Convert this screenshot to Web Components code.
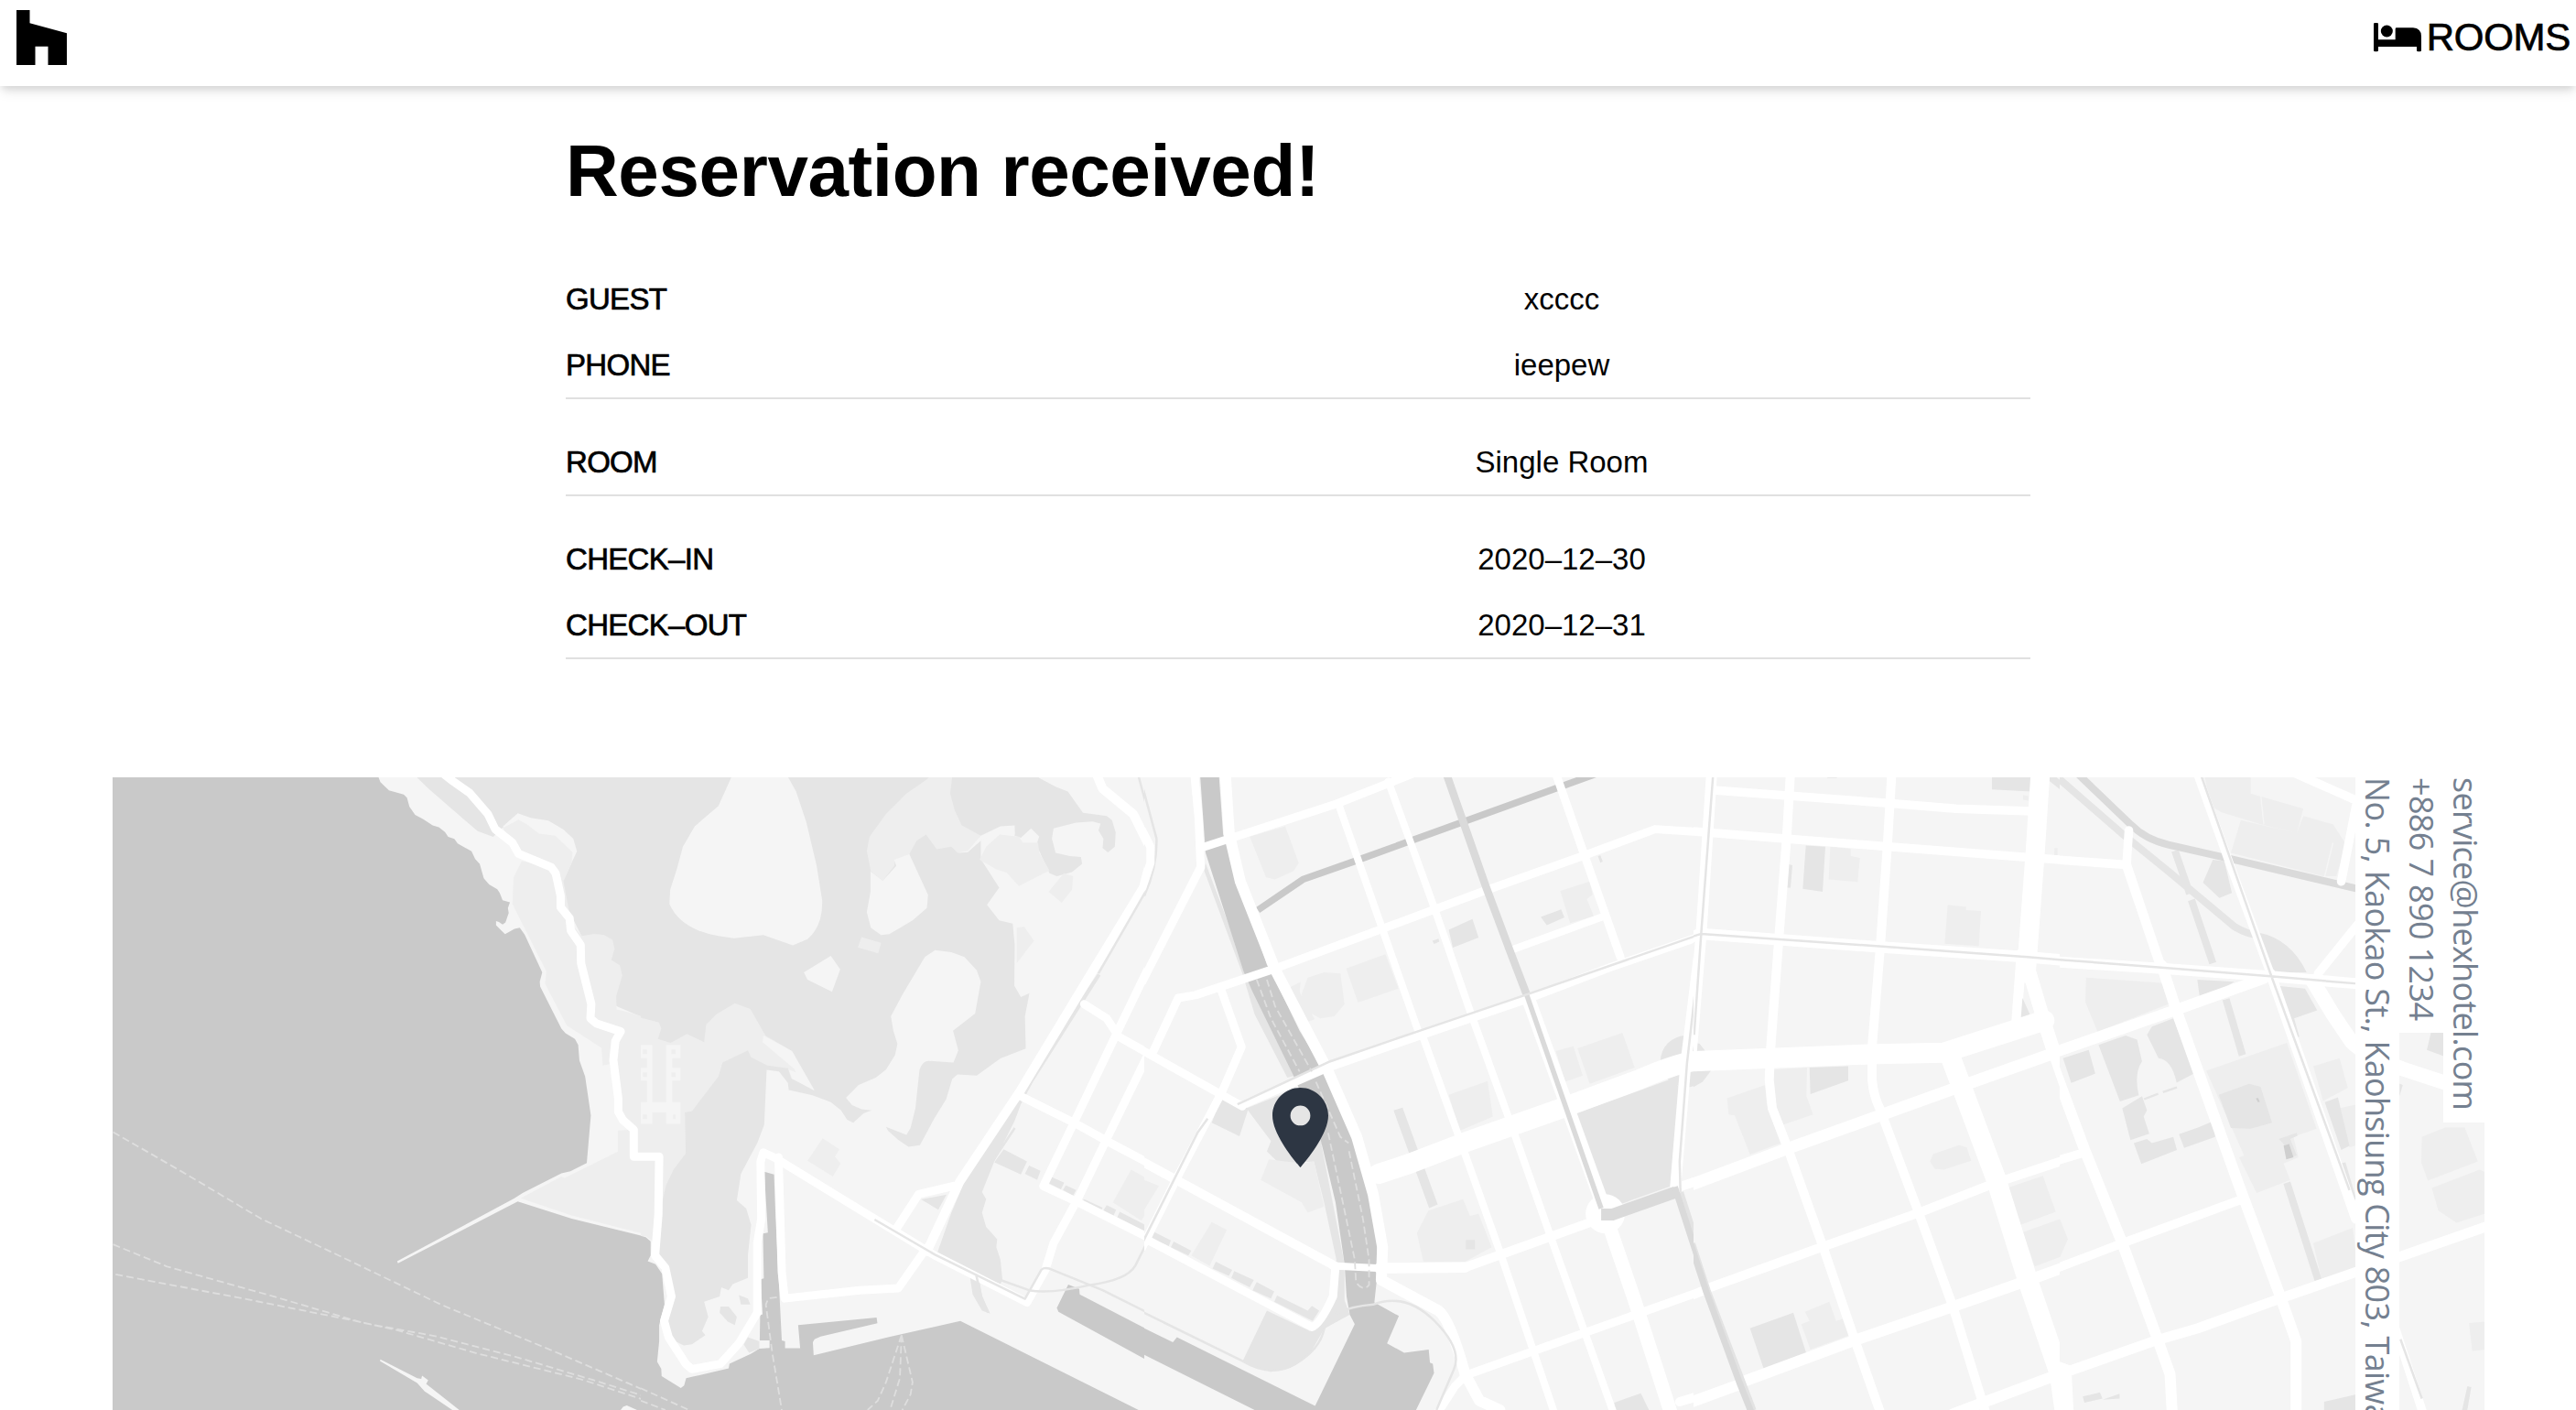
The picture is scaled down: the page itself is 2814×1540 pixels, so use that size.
<!DOCTYPE html>
<html lang="en">
<head>
<meta charset="utf-8">
<title>Hex Hotel – Reservation</title>
<style>
html,body{margin:0;background:#fff;color:#000;font-family:"Liberation Sans",Arial,sans-serif}
body{height:1540px;overflow:hidden}
</style>
</head>
<body>
<hotel-page>
  <site-header slot="header"><nav-link>ROOMS</nav-link></site-header>
  <reservation-summary heading="Reservation received!">
    <detail-group>
      <detail-row label="GUEST">xcccc</detail-row>
      <detail-row label="PHONE">ieepew</detail-row>
    </detail-group>
    <detail-group>
      <detail-row label="ROOM">Single Room</detail-row>
    </detail-group>
    <detail-group>
      <detail-row label="CHECK–IN">2020–12–30</detail-row>
      <detail-row label="CHECK–OUT">2020–12–31</detail-row>
    </detail-group>
  </reservation-summary>
  <hotel-map>
    <contact-line style="--ls:-.72px">service@hexhotel.com</contact-line>
    <contact-line style="--ls:-.65px">+886 7 890 1234</contact-line>
    <contact-line style="--ls:-.72px">No. 5, Kaokao St., Kaohsiung City 803, Taiwan</contact-line>
  </hotel-map>
</hotel-page>

<template id="map-art">
<svg class="art" width="2591" height="691" viewBox="123 849 2591 691" xmlns="http://www.w3.org/2000/svg">
<rect x="120" y="840" width="2600" height="700" fill="#f5f5f5"/>
<!-- coast -->
<svg x="120" y="840" width="580" height="700" viewBox="0 0 1299.2 1568" preserveAspectRatio="none">
<rect width="1300" height="1568" class="w"/>
<path class="l" d="M657,0V19L662,32 683,52 719,62 727,70 733,92 747,112 766,122 790,138 805,142 820,154 828,166 843,171 851,182 885,201 894,220 905,232 915,267 928,282 948,294 954,303 961,321 979,326 974,340 976,352 968,375 961,380 952,374 945,372 945,382 967,404 990,391 1003,388 1015,405 1058,497 1052,520 1053,532 1105,635 1115,646 1138,660 1146,675 1149,713 1163,752 1177,847 1167,964 1127,984 1105,989 1010,1037 990,1050 703,1204 705,1209 998,1058 1130,1100 1310,1144V0Z"/>
<path class="p" d="M735,0L750,19 780,48 900,152 938,166 962,142 1100,240 1115,330 1150,400 1240,580 1310,610V0Z"/>
<path class="l" d="M962,140L998,108 1030,119 1073,126 1110,148 1134,170 1143,201 1110,272 1000,212Z"/>
<path class="f" d="M962,144L1000,124 1020,135 1050,158 1090,163 1132,204 1130,230 1110,275 1085,245 1000,212Z"/>
<path class="f" d="M1008,225L988,265 985,330 1068,495 1065,525 1118,627 1203,682 1206,725 1222,722 1250,840 1280,882 1243,884V936L1113,1000 1105,997 1005,1050 1130,1092 1310,1138V608L1270,595 1240,588 1239,555 1254,505 1248,480 1227,467 1235,440 1230,418 1210,406 1185,403 1155,408 1130,380 1110,275 1085,240Z"/>
<path class="r" style="--w:9" d="M808,5L840,30 880,58 925,110 943,147 985,180 1000,207 1080,240 1091,255 1103,310 1103,338 1125,365 1128,395 1152,430 1153,475 1178,575 1176,610 1190,622 1250,642 1237,665 1232,712 1244,805 1244,838 1255,858 1282,882V948H1310"/>
<path class="d" d="M8,888L185,990 370,1100 560,1190 810,1310 1100,1430 1420,1568M8,1163L140,1217 400,1290 620,1355 800,1388 1000,1440 1200,1500 1420,1570M14,1236L350,1300 600,1350 700,1372 900,1430 1150,1492 1390,1570"/>
<path class="l" d="M662,1444L752,1490 762,1492 764,1484 779,1495 774,1504 855,1568H838L770,1522 752,1502 661,1448ZM1250,1568L1256,1560 1265,1557 1290,1568Z"/>
</svg>
<!-- headland and harbour -->
<svg x="700" y="840" width="550" height="700" viewBox="0 0 1232 1568" preserveAspectRatio="none">
<path class="w" d="M0,1142L12,1145 24,1155V1190L17,1204 36,1211 52,1235 58,1310 45,1360V1400L40,1450 50,1467 51,1485 98,1514 106,1508 111,1490 125,1487 215,1466 217,1455 270,1430 290,1418 315,1416V1398H291L292,1336 298,1334 293,1248 301,1246 299,1136 311,1134 302,985 326,992 330,1100 345,1398 353,1400V1417H390L385,1360 577,1342 579,1356 440,1388 425,1395 421,1402 423,1434 605,1390 782,1350 1218,1568H0Z"/>
<path class="w" d="M1046,1261L1073,1272 1074,1285 1300,1402V1480L1022,1328 1018,1318Z"/>
<path class="p" d="M0,0H960L975,22 1015,43 1045,55 1082,107 1120,112 1140,115 1153,125 1162,155 1160,190 1143,204 1130,193 1132,170 1120,150 1125,133 1105,128 1065,131 1010,145 1006,170 1015,205 1050,213 1077,215 1080,232 1055,252 1018,262 1000,255 975,200 968,185 975,165 955,145 930,168 915,163 914,139 880,143 832,175V220L877,290 847,332 877,370 910,378 915,430 914,530 930,558 951,548 940,605 942,684 880,708 822,750 775,747 762,758 747,808 718,855 683,920 655,924 630,907 605,885 600,875 650,895 660,878 672,830 682,735Q690,714 704,714L765,718 777,688 764,640 818,598 832,520 822,492 792,460 760,448 720,443 695,460 640,552 612,605 618,640 628,672 622,700 600,735 575,755 533,773 502,804 517,822 540,832 565,835 545,842 520,865 505,858 490,835 465,815 420,798 362,785 360,768 338,740 308,736 302,870 285,915 245,990 235,1055 258,1075 270,1115 262,1190V1245L225,1260 215,1275 197,1268 193,1290 155,1303 165,1340 150,1375 158,1385 125,1407 105,1410 75,1395 50,1350 80,1290 35,1190V900H0Z"/>
<path class="f" d="M0,608L45,620 50,635 42,660 73,670 113,648 155,668 160,625 185,600 230,573 268,587 305,652 370,690 425,785 368,757 360,732 310,725 270,705 262,688 200,718 190,752 125,837 108,840 110,940 80,980 62,1018 45,1090 30,1155 12,1143 0,1142Z"/>
<path class="l" d="M300,652L370,690 425,787 370,757 362,735 380,742 375,733 298,668ZM222,19L190,90 132,140 103,190 88,245 72,295 70,330Q98,393 190,408L228,414 300,406 372,431 408,416Q445,385 444,322L430,235 405,130 380,55 360,19V0H230ZM399,497L465,457 488,490 468,545 408,515Z"/>
<path class="f" d="M540,411L588,425 581,451 531,436ZM720,5L700,25 650,60 600,110 560,165 553,200 563,250 592,273 620,237 622,222 657,208 675,175 698,160 724,196 760,190 775,205 800,203 832,163 785,137 768,100 757,60 762,19V0Z"/>
<path class="l" d="M657,208L703,308 700,340 665,370 608,404 588,406 563,388 553,350 562,300V250L592,273 625,237 620,222ZM775,205L800,203 832,175 880,152 903,148V160H915V138L880,140 832,163 800,200Z"/>
<path class="f" d="M829,222L845,190 878,160 925,165 935,180 972,180 975,205 1000,248 925,286 895,253 870,245ZM1035,255L1058,262 1055,295 1030,327 998,300ZM920,388L938,385 962,420 920,475ZM445,903L486,930 475,948 489,965 470,997 408,958ZM1200,980L1268,1018 1245,1070 1225,1105 1155,1060Z"/>
<path class="p" d="M1118,500L1125,505 960,765 930,820 915,860 865,960 835,1035 845,1052 835,1085 845,1120 872,1150 870,1170 880,1200 885,1250 880,1260 830,1240 725,1185 760,1085 800,990 930,780ZM803,1225H825L835,1290 855,1332 835,1325 812,1285ZM686,1053L748,1041 728,1078Z"/>
<path class="p" d="M240,1287L262,1295 268,1310 245,1310ZM195,1315H215L235,1340 230,1360 213,1352 193,1330ZM252,1408L262,1390 290,1400V1418L265,1428Z"/>
<path class="l" d="M-4,675H28V868H-4V835H15V762H-4V731H15V707H-4ZM62,675H97V707H77V731H97V762H77V815H97V868H62V840H0V815H62Z"/>
<path class="f" d="M5,686h10v11h-10ZM75,686h10v11h-10ZM5,742h10v11h-10ZM75,742h10v11h-10ZM5,845h10v11h-10ZM79,845h6v11h-6Z"/>
<path class="p" d="M888,930L945,960 930,992 865,962ZM950,970L978,983 970,1005 940,990ZM1003,997L1036,1012 1028,1028 996,1012ZM1040,1018L1065,1030 1058,1043 1033,1030ZM1085,1052L1130,1073 1126,1080 1078,1058ZM1140,1067L1163,1078 1155,1097 1130,1083ZM1172,1083L1240,1118 1233,1133 1165,1098Z"/>
<path class="r" style="--w:9" d="M-5,948H45L43,1090 35,1190 60,1220 75,1290 57,1350 68,1390 110,1455 125,1468 195,1455 240,1405 285,1330 285,1160 295,1100 293,960 300,938 330,952 490,1050 720,1190 945,1305 990,1225 1010,1160 1070,1050 1140,905 1245,690"/>
<path class="r" style="--w:9" d="M337,950L345,1230 352,1295 535,1275 630,1270 700,1170M625,1125L680,1040 765,1020M985,1020L1060,865 1170,635 1245,480M1085,575L1140,610 1170,655 1250,700M935,803L1060,865 1150,915 1320,1005M985,1020L1070,1060 1240,1145"/>
<path class="r" style="--w:10" d="M700,1180L780,1010 930,785 1090,520 1230,290 1248,220 1245,190 1205,110 1130,48 1112,5"/>
<path class="t" d="M1216,10L1240,100 1260,180 1258,240 1235,300 1120,500M1240,1155L1210,1215Q1190,1250 1100,1262 1000,1285 950,1275L880,1250M572,1102L720,1188 940,1296 980,1225Q985,1218 1000,1222L1130,1275 1240,1330M915,878L862,958M820,1235L833,1290 850,1330"/>
<path class="d" d="M333,1292L312,1295 306,1310 322,1430 345,1568M638,1385L600,1500 580,1545 555,1568M638,1385L634,1490 610,1568M638,1385L665,1500 660,1530 640,1568M0,1515L118,1568M0,1545L60,1568"/>
</svg>
<!-- river and west grid -->
<svg x="1250" y="840" width="600" height="700" viewBox="0 0 1344 1568" preserveAspectRatio="none">
<path class="p" d="M150,230L250,495 275,560 370,750 350,755 270,600 240,500 147,250ZM400,930L430,900 490,1210V1300L503,1335 440,1370 400,1440 360,1465 310,1475 240,1450 300,1325 405,1375 450,1300 468,1290 470,1200 440,1060 415,960Z"/>
<path class="l" d="M515,1358L440,1510 418,1558 300,1500 310,1475Q400,1470 440,1370L503,1335Z"/>
<path class="p" d="M250,830L350,790 400,780 440,900 420,960 330,965 300,935 310,910 280,870ZM190,800L230,820 255,830 233,898 165,865ZM25,1133L65,1153 60,1167 18,1148ZM72,1156L115,1178 108,1190 65,1170ZM175,1205L215,1225 207,1240 167,1222ZM220,1228L268,1250 258,1268 213,1245ZM275,1255L318,1278 310,1295 265,1275ZM325,1288L400,1325 410,1313 428,1325 412,1350 318,1303Z"/>
<path class="w" d="M135,0L137,19 150,205 243,495 265,545 365,750 430,900 468,1060 490,1210 495,1290 503,1335 515,1358 418,1558 80,1390 70,1402 0,1368V1433L270,1568H665L709,1478 706,1455 699,1452 696,1420 636,1428 594,1405 623,1338 563,1305 570,1240V1140L550,1010 500,880 440,740 380,640 315,505 300,478 265,375 262,355 222,265 203,185 193,160 183,19V0Z"/>
<path class="f" d="M305,955L385,965 415,960 440,1070 400,1085 385,1060 285,1005ZM165,1108L202,1127 160,1215 115,1190ZM0,1005L36,1020 0,1078ZM258,165L345,140 378,230 365,250 320,270 298,265ZM385,550L400,510 440,497 480,500 490,575 465,605 430,610 395,590ZM355,535L383,520 380,545 417,612 400,618ZM494,488L590,453 622,537 523,571ZM1018,298L1090,275 1097,307 1083,318 1100,360 1042,377ZM1007,690L1050,678 1073,750 1030,765ZM1060,683L1170,645 1200,730 1090,770ZM745,797L840,763 853,850 772,885ZM695,1080L780,1052 797,1093 818,1088 850,1170 785,1205H683L667,1135Z"/>
<path class="p" d="M745,393L803,367 818,412 755,437ZM705,420L720,415 722,422 709,428ZM970,362L1020,343 1028,363 985,382ZM610,835L632,828 718,1065 697,1074ZM787,1152h22v23h-22ZM1057,842L1285,760 1310,778 1290,1020 1135,1075ZM1150,1550L1215,1527 1235,1568H1150ZM1110,213l6,-2 6,15 -6,3Z"/>
<circle class="p" cx="1326" cy="715" r="63"/>
<path class="k" style="--w:7.5;stroke:#c9c9c9" d="M278,345L388,270 510,227 1110,10"/>
<path class="r" style="--w:9" d="M122,5L133,120 138,240 -5,520M148,190L470,85 660,10M20,695L83,560 125,553 320,488 835,297M850,292L1080,210 1250,147 1350,153M188,540L238,680 190,790 80,1000 -5,1170M-5,688L240,825M240,822L450,730 680,650 930,565 1140,485 1364,408M1005,5L1075,205 1165,460M468,1215L462,1290Q430,1360 410,1365L-5,1145M795,1480L1080,1378 1370,1275M1385,1270L1568,1205M790,1480L760,1510 715,1580"/>
<path class="r" style="--w:8" d="M475,85L670,640M680,650L770,900 870,1180 1005,1580M597,30L710,340 800,600 905,890 1000,1160 1150,1580M905,440L1120,362"/>
<path class="r" style="--w:12" d="M198,5L208,160 235,275 320,490 450,740 520,900 560,1040 583,1170 580,1250 720,1325Q748,1345 785,1480L820,1545 870,1568"/>
<path class="r" style="--w:10" d="M-5,960L460,1212M785,1219L1130,1095M1310,1022L1568,935M1310,1548L1455,1505M1475,1500L1568,1468"/>
<path class="r" style="--w:11.5" d="M575,1221L785,1219"/>
<path class="r" style="--w:8" d="M460,1215L590,1222"/>
<path class="r" style="--w:22" d="M574,990L650,965 780,915 1020,830 1210,760Q1310,716 1360,713L1568,708"/>
<path class="r" style="--w:15" d="M1130,1095L1200,1300 1290,1580"/>
<circle cx="1128" cy="1088" r="48" fill="#fff"/>
<path class="r" style="--w:15;stroke-linecap:butt" d="M939,560L1127,1080"/>
<path class="r" style="--w:12" d="M1393,5L1364,403 1325,720 1300,1020"/>
<path class="k" style="--w:8.5" d="M737,5L835,285 893,440 935,550"/>
<path class="k" style="--w:5.5" d="M935,550L1118,1075"/>
<path class="k" style="--w:13" d="M1118,1090L1145,1090 1300,1035"/>
<path class="k" style="--w:5;stroke:#e3e3e3" d="M1314,1035L1392,1275 1500,1580"/>
<path class="k" style="--w:7" d="M1298,1022L1380,1275 1470,1520 1485,1580"/>
<path class="t" d="M228,820L455,715 680,638 935,552 1364,403 1400,406M1392,5L1364,403 1328,720 1310,960 1312,1035M155,855L130,890 -5,1160M-5,1328L240,1448Q310,1490 370,1455T440,1370 560,1310Q640,1280 710,1350T757,1470L715,1568M-5,40L30,170Q32,240 0,310"/>
<path class="r" style="--w:9" d="M-5,150L15,190V230L-5,290"/>
<path class="d" d="M275,515L310,610 380,740M300,515L320,580 410,740M450,890L490,1080 515,1200 518,1255Q535,1280 550,1262V1200L535,1100 500,930M420,765L480,900 500,915"/>
</svg>
<!-- centre grid -->
<svg x="1850" y="840" width="400" height="700" viewBox="0 0 1200 1568" preserveAspectRatio="none">
<path class="f" d="M110,805L235,773 240,820 285,915 185,943 135,847 115,845ZM260,735L372,730 370,800 392,845 293,870 262,820ZM775,960L785,942 870,920 895,925 910,958 820,980 790,978ZM448,190L515,195V213L545,217 538,276 443,270ZM833,332L893,337V345L942,347 935,433 823,427ZM1080,64L1098,66 1097,77 1080,75ZM365,1328L445,1303 467,1350 490,1345 512,1385 383,1420 353,1358 380,1350ZM1028,1025L1145,995 1187,1083 1072,1115ZM1080,1133L1203,1100 1230,1155 1203,1165 1215,1190 1118,1217ZM1183,193h10v18h-11Z"/>
<path class="p" d="M380,730L507,727V762L383,795ZM368,187L432,190 423,300 358,293ZM312,233L324,235 318,290H306ZM978,0H1107V55L978,50ZM185,1368L327,1330 370,1430 230,1467ZM0,668L20,672 37,688 57,738 30,765 0,778ZM415,0H470V22L440,22Z"/>
<path class="k" style="--w:8;stroke:#e5e5e5" d="M1150,8L1420,170"/>
<path class="r" style="--w:12" d="M60,5L25,403 -10,720"/>
<path class="r" style="--w:9.5" d="M75,52L630,83 860,97 1110,103M-5,152L300,170 640,190 1080,215 1420,234"/>
<path class="r" style="--w:12.5" d="M-5,410L25,403 640,437 1095,460 1500,485"/>
<path class="r" style="--w:10" d="M318,5L305,170 280,410 253,680 248,760 258,830 310,930 425,1170 530,1400 615,1580M650,5L635,190 612,435 585,680V760Q590,800 610,830L740,1090 850,1315 955,1568"/>
<path class="r" style="--w:21" d="M1137,5L1120,200 1090,500"/>
<path class="r" style="--w:11" d="M1075,450L1058,620"/>
<path class="r" style="--w:15" d="M1102,500L1150,620 1180,690"/>
<path class="r" style="--w:13" d="M1180,690L1290,930"/>
<path class="r" style="--w:22" d="M-5,715L600,697 820,694 1150,615"/>
<path class="r" style="--w:22" d="M840,700L990,1000 1095,1250 1200,1480 1218,1580"/>
<path class="r" style="--w:13" d="M-5,1016L310,928 620,845 880,775 1180,695 1500,612"/>
<path class="r" style="--w:10" d="M-5,1287L35,1275M55,1268L425,1168 740,1085 980,1015 1290,938"/>
<path class="r" style="--w:12" d="M-5,1548L145,1507M165,1498L530,1397 850,1315 1100,1250 1400,1168M850,1578L955,1548 1200,1480 1500,1405"/>
<path class="p" d="M1078,560L1102,600 1073,607Z"/>
<path class="k" style="--w:4;stroke:#e3e3e3" d="M0,1160L50,1275 165,1500 200,1568"/>
<path class="k" style="--w:7" d="M-10,1160L40,1275 150,1500 190,1575"/>
<path class="t" d="M65,5L25,403 2,650M-5,410L25,403 640,435 1095,460 1500,485"/>
</svg>
<!-- east grid -->
<svg x="2250" y="840" width="464" height="700" viewBox="0 0 1290 1568" preserveAspectRatio="none">
<path class="f" d="M80,510L310,523 345,570 115,643 78,570ZM445,738L690,670 780,880 710,900 725,950 680,965 700,1005 598,1037 545,950 560,945ZM770,1160L890,1122 905,1220 795,1247ZM435,0H580V60L740,97 720,157 610,135 490,105 460,90ZM550,125L720,157 740,115 830,135 870,185 840,262 800,262 520,205ZM770,727L850,707 875,780 800,812ZM848,830L905,820V920L880,925ZM1100,900L1170,877H1230L1270,960 1118,1007 1098,962ZM1130,1025L1275,980 1290,985V1088L1205,1110 1150,1080ZM1243,1355L1290,1352V1420L1253,1424ZM0,1100L25,1150 0,1195Z"/>
<path class="p" d="M10,707L88,687 108,745 35,768ZM118,675L200,652 235,662 250,715Q225,745 240,798L183,813ZM265,650L280,630 345,610 408,745 355,767Q340,710 300,707ZM190,830L250,800 265,835 255,850 272,892 215,908ZM225,915L265,905 280,915 345,900 356,932 248,966ZM362,893L420,877 470,860 472,900 378,927ZM483,797L575,770 610,777 645,865 580,880 520,878ZM418,515L530,520 480,545 425,558ZM603,400Q700,415 750,497H640ZM655,530L745,537 782,590 712,610 728,655H700ZM465,222L500,225 523,303 485,315 435,278ZM805,815L845,803 880,922 855,932ZM850,965L868,962 900,1050 890,1060ZM1128,643H1166V702L1115,687ZM1238,1510L1250,1512 1238,1568H1222ZM803,1548L900,1530V1568H803ZM70,1535L122,1525 130,1540 75,1550ZM130,1543L182,1528V1540ZM1032,770L1042,773 1032,800ZM255,805L298,792 300,797 258,810ZM312,788L355,776 357,781 315,793ZM665,905L720,890 722,897 700,905 720,945 700,950 678,915Z"/>
<path d="M680,921L697,917 710,950 688,955ZM596,806l6,-2 6,10 -6,1Z" fill="#cfcfcf"/>
<path class="l" d="M610,60L620,135M830,180L805,262" stroke="#f5f5f5" stroke-width="4"/>
<path class="k" style="--w:8;stroke:#e5e5e5" d="M-10,18L200,165 330,250 530,385Q570,405 603,405M350,200L395,305M400,320L465,475M505,563L555,700M690,1012L785,1250"/>
<path class="k" style="--w:8" d="M40,0L215,135Q260,172 330,185L520,220 900,292"/>
<path class="r" style="--w:9.5" d="M-10,222L203,234M210,150L203,235M-5,957L75,938M-5,1220L200,1157 545,1055M785,500L905,380M700,5L905,78M900,90L855,275M1020,1370L1105,1580"/>
<path class="r" style="--w:10.5" d="M203,235L310,490"/>
<path class="r" style="--w:12" d="M310,480L350,580 545,1020 670,1290 718,1400V1580M-5,690L350,590 620,512M-40,680L75,930 190,1160 295,1390 335,1480 342,1580"/>
<path class="r" style="--w:9" d="M415,5L520,240 640,500"/>
<path class="r" style="--w:11" d="M640,500L770,800 900,1100"/>
<path class="r" style="--w:11" d="M20,1475L295,1397 420,1368 670,1295 905,1229 1300,1118"/>
<path class="r" style="--w:12" d="M-5,472L300,487 640,507 905,525"/>
<path class="r" style="--w:16" d="M770,520L830,600 880,660Q900,690 1040,733L1180,770"/>
<path d="M0,1450L35,1460 42,1568H0Z" fill="#fff"/>
<path class="t" d="M-5,466L300,485 640,507 905,525M425,5L640,500 880,1030M1035,1395L1100,1540"/>
</svg>
</svg>
</template>

<script>
const define = (name, css, html, setup) => customElements.define(name, class extends HTMLElement {
  constructor() {
    super();
    this.attachShadow({ mode: 'open' }).innerHTML = `<style>${css}</style>${html}`;
  }
  connectedCallback() { if (setup) setup(this, this.shadowRoot); }
});

define('hotel-page',
  `:host{display:flex;flex-direction:column;height:1540px;overflow:hidden}
   main{display:flex;flex-direction:column;padding:0 101px 0 123px}`,
  `<slot name="header"></slot><main><slot></slot></main>`);

define('site-header',
  `:host{display:flex;flex:none;justify-content:space-between;align-items:center;height:94px;box-sizing:border-box;padding:0 6px 0 18px;background:#fff;
     box-shadow:0 8px 12px -2px rgba(0,0,0,.1),0 4px 8px -2px rgba(0,0,0,.1);position:relative;z-index:1}
   .logo{display:block;margin-bottom:13px}`,
  `<svg class="logo" width="55" height="60" viewBox="0 0 55 60"><path d="M0,0H14.5V14.3L55,25.3V60H34.5V39.7H20.5V60H0Z"/></svg><slot></slot>`);

define('nav-link',
  `:host{display:flex;align-items:center;gap:6px;font-size:42px;line-height:48px;-webkit-text-stroke:.7px #000;margin-bottom:12px}
   svg{display:block}span{letter-spacing:-.3px}`,
  `<svg width="52" height="32" viewBox="116 74 156 96"><g fill="#000"><rect x="116" y="74" width="15" height="94" rx="4"/><circle cx="159" cy="101" r="19.5"/><path d="M191,90H245Q272,92 272,118V164Q272,168 268,168H261Q257,168 257,164V152H125V129H187V94Q187,90 191,90Z"/></g></svg><span><slot></slot></span>`);

define('reservation-summary',
  `:host{display:flex;flex-direction:column;width:1600px;align-self:center;margin-bottom:129px}
   h1{margin:47px 0 0;height:149px;font-size:80px;line-height:92px;font-weight:700;letter-spacing:-.4px}
   .groups{display:flex;flex-direction:column;gap:32px}`,
  `<h1></h1><div class="groups"><slot></slot></div>`,
  (el, root) => root.querySelector('h1').textContent = el.getAttribute('heading'));

define('detail-group',
  `:host{display:flex;flex-direction:column;border-bottom:2px solid #e0e0e0}`, `<slot></slot>`);

define('detail-row',
  `:host{display:grid;grid-template-columns:576px 1024px;height:72px;box-sizing:border-box;padding-top:2px;align-items:center;font-size:33px;line-height:48px}
   .label{-webkit-text-stroke:.7px #000;letter-spacing:-.7px}.value{text-align:center}`,
  `<div class="label"></div><div class="value"><slot></slot></div>`,
  (el, root) => root.querySelector('.label').textContent = el.getAttribute('label'));

define('hotel-map',
  `:host{display:block;position:relative;width:2591px;height:691px}
   .art{display:block}
   .w{fill:#c9c9c9}.l{fill:#f5f5f5}.p{fill:#e5e5e5}.f{fill:#eee}
   .r,.k,.t,.d{fill:none;stroke-linejoin:round;vector-effect:non-scaling-stroke}
   .r{stroke:#fff;stroke-width:var(--w);stroke-linecap:round}
   .k{stroke:#dadada;stroke-width:var(--w)}
   .t{stroke:#e5e5e5;stroke-width:2.5}
   .d{stroke:#dedede;stroke-width:1.8;stroke-dasharray:8 4}
   .pin{position:absolute;left:1266.5px;top:338.5px}
   .contact{position:absolute;top:0;right:-3px;display:block;writing-mode:vertical-rl}`,
  `<svg class="pin" width="61" height="87" viewBox="5 2 14 20" preserveAspectRatio="none"><circle cx="12" cy="9" r="3" fill="#e5e5e5"/><path fill="#2d3643" fill-rule="evenodd" d="M12 2C8.13 2 5 5.13 5 9c0 5.25 7 13 7 13s7-7.75 7-13c0-3.87-3.13-7-7-7zm0 9.5a2.5 2.5 0 0 1 0-5 2.5 2.5 0 0 1 0 5z"/></svg>
   <div class="contact"><slot></slot></div>`,
  (el, root) => root.insertBefore(document.getElementById('map-art').content.cloneNode(true), root.querySelector('.pin')));

define('contact-line',
  `:host{display:block;font-family:"Open Sans","Noto Sans",sans-serif;font-size:36px;line-height:48px;color:#748090;white-space:nowrap}
   span{display:inline-block;background:#fff;letter-spacing:var(--ls);padding-bottom:14px}`,
  `<span><slot></slot></span>`);
</script>
</body>
</html>
